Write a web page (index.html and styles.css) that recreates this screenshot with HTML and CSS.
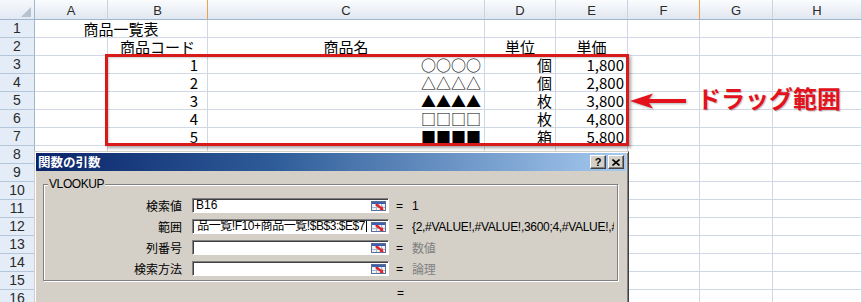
FILE: index.html
```html
<!DOCTYPE html>
<html lang="ja">
<head>
<meta charset="utf-8">
<title>VLOOKUP 関数の引数</title>
<link rel="stylesheet" href="styles.css">
</head>
<body>
<div class="page">
  <div class="sheet">
    <div class="corner"><span class="tri"></span></div>
    <div class="ch">A</div><div class="ch sel">B</div><div class="ch">C</div><div class="ch">D</div><div class="ch">E</div><div class="ch sel">F</div><div class="ch">G</div><div class="ch">H</div>

    <div class="rh">1</div><div class="c ctr span2">商品一覧表</div><div class="c"></div><div class="c"></div><div class="c"></div><div class="c"></div><div class="c"></div><div class="c"></div>
    <div class="rh">2</div><div class="c"></div><div class="c ctr">商品コード</div><div class="c ctr">商品名</div><div class="c ctr">単位</div><div class="c ctr">単価</div><div class="c"></div><div class="c"></div><div class="c"></div>
    <div class="rh">3</div><div class="c"></div><div class="c r num">1</div><div class="c r shp">○○○○</div><div class="c r">個</div><div class="c r">1,800</div><div class="c"></div><div class="c"></div><div class="c"></div>
    <div class="rh">4</div><div class="c"></div><div class="c r num">2</div><div class="c r shp">△△△△</div><div class="c r">個</div><div class="c r">2,800</div><div class="c"></div><div class="c"></div><div class="c"></div>
    <div class="rh">5</div><div class="c"></div><div class="c r num">3</div><div class="c r shp">▲▲▲▲</div><div class="c r">枚</div><div class="c r">3,800</div><div class="c"></div><div class="c"></div><div class="c"></div>
    <div class="rh">6</div><div class="c"></div><div class="c r num">4</div><div class="c r shp">□□□□</div><div class="c r">枚</div><div class="c r">4,800</div><div class="c"></div><div class="c"></div><div class="c"></div>
    <div class="rh">7</div><div class="c"></div><div class="c r num">5</div><div class="c r shp">■■■■</div><div class="c r">箱</div><div class="c r">5,800</div><div class="c"></div><div class="c"></div><div class="c"></div>
    <div class="rh">8</div><div class="c"></div><div class="c"></div><div class="c"></div><div class="c"></div><div class="c"></div><div class="c"></div><div class="c"></div><div class="c"></div>
    <div class="rh">9</div><div class="c"></div><div class="c"></div><div class="c"></div><div class="c"></div><div class="c"></div><div class="c"></div><div class="c"></div><div class="c"></div>
    <div class="rh">10</div><div class="c"></div><div class="c"></div><div class="c"></div><div class="c"></div><div class="c"></div><div class="c"></div><div class="c"></div><div class="c"></div>
    <div class="rh">11</div><div class="c"></div><div class="c"></div><div class="c"></div><div class="c"></div><div class="c"></div><div class="c"></div><div class="c"></div><div class="c"></div>
    <div class="rh">12</div><div class="c"></div><div class="c"></div><div class="c"></div><div class="c"></div><div class="c"></div><div class="c"></div><div class="c"></div><div class="c"></div>
    <div class="rh">13</div><div class="c"></div><div class="c"></div><div class="c"></div><div class="c"></div><div class="c"></div><div class="c"></div><div class="c"></div><div class="c"></div>
    <div class="rh">14</div><div class="c"></div><div class="c"></div><div class="c"></div><div class="c"></div><div class="c"></div><div class="c"></div><div class="c"></div><div class="c"></div>
    <div class="rh">15</div><div class="c"></div><div class="c"></div><div class="c"></div><div class="c"></div><div class="c"></div><div class="c"></div><div class="c"></div><div class="c"></div>
    <div class="rh">16</div><div class="c"></div><div class="c"></div><div class="c"></div><div class="c"></div><div class="c"></div><div class="c"></div><div class="c"></div><div class="c"></div>
  </div>

  <div class="redbox"></div>
  <svg class="arrow" width="58" height="18" viewBox="0 0 58 18">
    <polygon points="0,9 23,1.5 19,7 56,7 56,11 19,11 23,16.5" fill="#e3121c"/>
  </svg>
  <div class="note">ドラッグ範囲</div>

  <div class="dialog">
    <div class="titlebar">
      <span class="title">関数の引数</span>
      <span class="tbtns">
        <span class="tbtn">?</span>
        <span class="tbtn"><svg width="8" height="7" viewBox="0 0 8 7"><path d="M0.5 0.5L7.5 6.5M7.5 0.5L0.5 6.5" stroke="#000" stroke-width="1.6"/></svg></span>
      </span>
    </div>
    <div class="group">
      <span class="legend">VLOOKUP</span>
      <div class="args">
        <span class="lbl">検索値</span>
        <div class="field"><span class="ftext">B16</span><svg class="ref" width="15" height="10" viewBox="0 0 15 10"><rect x="0.5" y="0.5" width="14" height="9" fill="#eef2f9" stroke="#5b6e95"/><rect x="1" y="1" width="13" height="2" fill="#3d5fae"/><path d="M5.5 3v6M10.5 3v6M1 6.5h13" stroke="#a9b8d2"/><path d="M4.5 3 L7 3 L10.5 6 L11.5 5 L12.5 9 L8.5 9 L9.5 8 L4.5 4.5 Z" fill="#e02424"/></svg></div>
        <span class="eq">=</span><span class="val">1</span>

        <span class="lbl">範囲</span>
        <div class="field"><span class="ftext end">品一覧!F10+商品一覧!$B$3:$E$7<span class="caret"></span></span><svg class="ref" width="15" height="10" viewBox="0 0 15 10"><rect x="0.5" y="0.5" width="14" height="9" fill="#eef2f9" stroke="#5b6e95"/><rect x="1" y="1" width="13" height="2" fill="#3d5fae"/><path d="M5.5 3v6M10.5 3v6M1 6.5h13" stroke="#a9b8d2"/><path d="M4.5 3 L7 3 L10.5 6 L11.5 5 L12.5 9 L8.5 9 L9.5 8 L4.5 4.5 Z" fill="#e02424"/></svg></div>
        <span class="eq">=</span><span class="val">{2,#VALUE!,#VALUE!,3600;4,#VALUE!,#VALUE!,4800;5,#VALUE!,#VALUE!,5800}</span>

        <span class="lbl">列番号</span>
        <div class="field"><span class="ftext"></span><svg class="ref" width="15" height="10" viewBox="0 0 15 10"><rect x="0.5" y="0.5" width="14" height="9" fill="#eef2f9" stroke="#5b6e95"/><rect x="1" y="1" width="13" height="2" fill="#3d5fae"/><path d="M5.5 3v6M10.5 3v6M1 6.5h13" stroke="#a9b8d2"/><path d="M4.5 3 L7 3 L10.5 6 L11.5 5 L12.5 9 L8.5 9 L9.5 8 L4.5 4.5 Z" fill="#e02424"/></svg></div>
        <span class="eq">=</span><span class="val dim">数値</span>

        <span class="lbl">検索方法</span>
        <div class="field"><span class="ftext"></span><svg class="ref" width="15" height="10" viewBox="0 0 15 10"><rect x="0.5" y="0.5" width="14" height="9" fill="#eef2f9" stroke="#5b6e95"/><rect x="1" y="1" width="13" height="2" fill="#3d5fae"/><path d="M5.5 3v6M10.5 3v6M1 6.5h13" stroke="#a9b8d2"/><path d="M4.5 3 L7 3 L10.5 6 L11.5 5 L12.5 9 L8.5 9 L9.5 8 L4.5 4.5 Z" fill="#e02424"/></svg></div>
        <span class="eq">=</span><span class="val dim">論理</span>
      </div>
    </div>
    <div class="result"><span class="eq">=</span></div>
  </div>
</div>
</body>
</html>
```
FILE: styles.css
```css
html, body {
  margin: 0;
  padding: 0;
  overflow: hidden;
  background: #fff;
}
body {
  font-family: "Noto Sans CJK JP", sans-serif;
}
.page {
  position: relative;
  width: 862px;
  height: 302px;
  overflow: hidden;
}

/* ---------- spreadsheet grid ---------- */
.sheet {
  display: grid;
  grid-template-columns: 35px 73px 100px 277px 71px 72px 72px 73px 1fr;
  grid-template-rows: 20px repeat(16, 18px);
}
.corner {
  box-sizing: border-box;
  background: linear-gradient(#f6f9fc, #e2e9f3);
  border-right: 1px solid #9eb6ce;
  border-bottom: 1px solid #9eb6ce;
  display: flex;
  justify-content: flex-end;
  align-items: flex-end;
  padding: 0 3px 2px 0;
}
.tri {
  width: 10px;
  height: 10px;
  background: #b6c2d2;
  clip-path: polygon(100% 0, 100% 100%, 0 100%);
}
.ch {
  box-sizing: border-box;
  background: linear-gradient(#fafcfe, #e1e7f0);
  border-right: 1px solid #c7d3e2;
  border-bottom: 1px solid #9eb6ce;
  font-family: "Liberation Sans", sans-serif;
  font-size: 13px;
  line-height: 16px;
  padding-top: 3px;
  text-align: center;
  color: #2a2a2a;
}
.ch.sel {
  border-right-color: #f0a04b;
}
.rh {
  box-sizing: border-box;
  background: #e4ecf7;
  border-right: 1px solid #9eb6ce;
  border-bottom: 1px solid #b3c6da;
  font-family: "Liberation Sans", sans-serif;
  font-size: 14px;
  line-height: 17px;
  text-align: center;
  color: #2a2a2a;
}
.c {
  box-sizing: border-box;
  border-right: 1px solid #d0d7e5;
  border-bottom: 1px solid #d0d7e5;
  font-size: 15px;
  line-height: 16px;
  padding-top: 1px;
  white-space: nowrap;
  color: #000;
}
.span2 { grid-column: span 2; }
.ctr { text-align: center; }
.r { text-align: right; padding-right: 3px; }
.num { padding-right: 9px; }
.shp { padding-right: 3px; }

/* ---------- annotation ---------- */
.redbox {
  position: absolute;
  left: 105px;
  top: 54px;
  width: 524px;
  height: 92px;
  box-sizing: border-box;
  border: 3px solid #d91a1a;
  box-shadow: 2px 2px 3px rgba(0, 0, 0, 0.35), inset 1px 1px 2px rgba(0, 0, 0, 0.2);
}
.arrow {
  position: absolute;
  left: 630px;
  top: 92px;
  filter: drop-shadow(1px 1px 1px rgba(0, 0, 0, 0.3));
}
.note {
  position: absolute;
  left: 697px;
  top: 86px;
  font-size: 24px;
  line-height: 24px;
  font-weight: 700;
  color: #e3121c;
  white-space: nowrap;
  text-shadow: 1px 1px 1px rgba(0, 0, 0, 0.25);
}

/* ---------- dialog ---------- */
.dialog {
  position: absolute;
  left: 34px;
  top: 151px;
  width: 595px;
  height: 170px;
  box-sizing: border-box;
  background: #d4d0c8;
  border-top: 1px solid #d4d0c8;
  border-left: 1px solid #d4d0c8;
  border-right: 1px solid #404040;
  box-shadow: inset 1px 1px 0 #fff, inset -1px 0 0 #808080;
  padding: 1px 2px 0 1px;
  font-family: "Liberation Sans", "Noto Sans CJK JP", sans-serif;
  font-size: 12px;
}
.titlebar {
  height: 18px;
  display: flex;
  align-items: center;
  justify-content: space-between;
  padding-left: 2px;
  background: linear-gradient(90deg, #0a246a 0%, #2e5c98 40%, #a6caf0 100%);
}
.title {
  color: #fff;
  font-family: "Noto Sans CJK JP", sans-serif;
  font-weight: 700;
  font-size: 12.5px;
  line-height: 16px;
}
.tbtns {
  display: flex;
  gap: 2px;
  margin-right: 2px;
}
.tbtn {
  box-sizing: border-box;
  width: 16px;
  height: 14px;
  background: #d4d0c8;
  border: 1px solid;
  border-color: #fff #404040 #404040 #fff;
  box-shadow: inset -1px -1px 0 #808080;
  display: flex;
  align-items: center;
  justify-content: center;
  font-family: "Liberation Sans", sans-serif;
  font-weight: 700;
  font-size: 11px;
  line-height: 11px;
  color: #000;
}
.group {
  position: relative;
  margin: 13px 8px 0 7px;
  border: 1px solid #808080;
  box-shadow: inset 1px 1px 0 #fff, 1px 1px 0 #fff;
  padding: 13px 0 4px 0;
}
.legend {
  position: absolute;
  left: 4px;
  top: -8px;
  padding: 0 1px;
  background: #d4d0c8;
  font-size: 12px;
  line-height: 14px;
  letter-spacing: -0.4px;
  color: #000;
}
.args {
  display: grid;
  grid-template-columns: 138px 207px 14px 1fr;
  grid-auto-rows: 15px;
  row-gap: 6px;
  align-items: center;
}
.lbl {
  text-align: right;
  font-family: "Noto Sans CJK JP", sans-serif;
  font-size: 12px;
  line-height: 14px;
  color: #000;
}
.field {
  margin-left: 10px;
  height: 15px;
  box-sizing: border-box;
  background: #fff;
  border-top: 1px solid #808080;
  border-left: 1px solid #808080;
  border-right: 1px solid #fff;
  border-bottom: 1px solid #fff;
  box-shadow: inset 1px 1px 0 #404040;
  display: flex;
  align-items: center;
  overflow: hidden;
}
.ftext {
  flex: 1;
  min-width: 0;
  padding-left: 3px;
  display: flex;
  align-items: center;
  overflow: hidden;
  white-space: nowrap;
  font-size: 12px;
  line-height: 13px;
  color: #000;
}
.ftext.end {
  justify-content: flex-end;
  padding-right: 3px;
  letter-spacing: -0.45px;
}
.caret {
  display: inline-block;
  width: 0;
  height: 11px;
  border-left: 1px solid #000;
  margin-left: 1px;
}
.ref {
  flex: none;
  margin: 1px 2px 0 1px;
}
.eq {
  margin-left: 7px;
  font-size: 12px;
  line-height: 14px;
  color: #000;
}
.val {
  margin-left: 9px;
  overflow: hidden;
  white-space: nowrap;
  font-size: 12px;
  line-height: 14px;
  letter-spacing: -0.3px;
  color: #000;
  margin-right: 3px;
}
.val.dim {
  color: #808080;
  font-family: "Noto Sans CJK JP", sans-serif;
}
.result {
  padding-left: 361px;
  margin-top: 5px;
  line-height: 14px;
}
.result .eq {
  margin-left: 0;
}
```
